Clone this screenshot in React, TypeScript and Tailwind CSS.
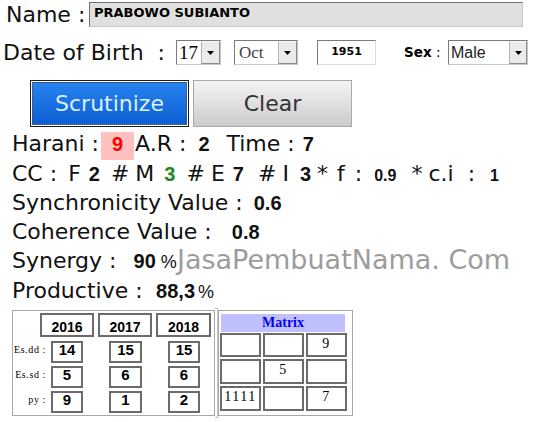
import React from "react";

const sans = "font-['DejaVu_Sans',sans-serif]";
const val = "font-['Liberation_Sans',sans-serif] text-[20px] font-bold";
const small = "font-['Liberation_Sans',sans-serif] text-[16px] font-bold";
const pct = "font-['Liberation_Sans',sans-serif] text-[18px]";

function Arrow() {
  return (
    <svg width="7" height="4" viewBox="0 0 7 4">
      <path d="M0 0H7L3.5 4Z" fill="#000" />
    </svg>
  );
}

function SelectBox({ width, text, textClass, btn = "w-[19px]" }: { width: string; text: string; textClass: string; btn?: string }) {
  return (
    <div className={`flex h-[25px] items-center border border-t-[#7b7b7b] border-l-[#7b7b7b] border-r-[#c6c6c6] border-b-[#c6c6c6] bg-white ${width}`}>
      <span className={textClass}>{text}</span>
      <div className={`ml-auto flex h-full items-center justify-center border border-t-[#f8f8f8] border-l-[#b4b4b4] border-r-[#8a8a8a] border-b-[#8a8a8a] bg-[#ebebeb] ${btn}`}>
        <Arrow />
      </div>
    </div>
  );
}

function Row({ children }: { children: React.ReactNode }) {
  return <div className="flex h-[29.3px] items-baseline whitespace-pre leading-[29.3px]">{children}</div>;
}

const years = ["2016", "2017", "2018"];
const rows = [
  { label: "Es.dd :", values: ["14", "15", "15"] },
  { label: "Es.sd :", values: ["5", "6", "6"] },
  { label: "py :", values: ["9", "1", "2"] },
];
const matrix = ["", "", "9", "", "5", "", "1111", "", "7"];

export default function App() {
  return (
    <div className={`relative h-[422px] w-[533px] overflow-hidden bg-white text-[#111] ${sans}`}>
      {/* Name */}
      <div className="mt-[2px] flex h-[25px] items-center">
        <span className="w-[89px] shrink-0 pl-[6px] text-[22px] leading-none">Name :</span>
        <div className="flex h-[25px] w-[434px] items-center border border-t-[#707070] border-l-[#707070] border-r-[#c8c8c8] border-b-[#c8c8c8] bg-[#e0e0e0] pb-[4px] pl-[4px]">
          <span className="text-[13px] font-bold leading-none text-black">PRABOWO SUBIANTO</span>
        </div>
      </div>

      {/* Date of birth */}
      <div className="mt-[13px] flex h-[25px] items-center">
        <span className="w-[176px] shrink-0 whitespace-pre pl-[3px] text-[22px] leading-none">Date of Birth  :</span>
        <SelectBox width="w-[45px]" text="17" textClass="pl-[2px] font-['Liberation_Serif',serif] text-[19px] leading-none text-black" />
        <div className="ml-[13px]">
          <SelectBox width="w-[64px]" text="Oct" textClass="pl-[4px] font-['Liberation_Serif',serif] text-[17px] leading-none text-[#444]" />
        </div>
        <div className="ml-[19px] flex h-[25px] w-[59px] items-center justify-center border border-t-[#7b7b7b] border-l-[#7b7b7b] border-r-[#dcdcdc] border-b-[#dcdcdc] pb-[3px]">
          <span className="text-[11px] font-bold leading-none text-black">1951</span>
        </div>
        <span className="ml-[28px] w-[44px] shrink-0 text-[13.5px] leading-none text-black">
          <b>Sex</b> :
        </span>
        <SelectBox width="w-[80px]" btn="w-[18px]" text="Male" textClass="pl-[2px] font-['Liberation_Sans',sans-serif] text-[16px] leading-none text-[#222]" />
      </div>

      {/* Buttons */}
      <div className="mt-[15px] flex">
        <div className="ml-[30px] h-[47px] w-[159px] border border-[#1c1c1c] bg-white p-[1px]">
          <div className="flex h-full w-full items-center justify-center border border-dotted border-[#5a4a30] bg-linear-to-b from-[#2682ee] to-[#0c5fd3] text-[22px] text-[#dcefff]">
            Scrutinize
          </div>
        </div>
        <div className="ml-[4px] flex h-[47px] w-[159px] items-center justify-center border border-[#a9a9a9] bg-linear-to-b from-[#f4f4f4] via-[#e0e0e0] to-[#cbcbcb] text-[22px] text-[#333]">
          Clear
        </div>
      </div>

      {/* Results */}
      <div className="mt-[2.25px] pl-[12px] text-[22px]">
        <Row>
          <span>Harani :</span>
          <span className="ml-[2px] flex h-[28px] w-[33px] items-center justify-center bg-[#ffc0c0] pb-[3px]">
            <span className="font-['Liberation_Sans',sans-serif] text-[20px] font-bold leading-none text-[#ff0000]">9</span>
          </span>
          <span className="ml-[1px]">A.R :</span>
          <span className={`${val} ml-[12px]`}>2</span>
          <span className="ml-[17px]">Time :</span>
          <span className={`${val} ml-[8px]`}>7</span>
        </Row>
        <Row>
          <span>CC :</span>
          <span className="ml-[11px]">F</span>
          <span className={`${val} ml-[8px]`}>2</span>
          <span className="ml-[11px]">#</span>
          <span className="ml-[6px]">M</span>
          <span className={`${val} ml-[10px] text-[#1a8a1a]`}>3</span>
          <span className="ml-[11px]">#</span>
          <span className="ml-[6px]">E</span>
          <span className={`${val} ml-[8px]`}>7</span>
          <span className="ml-[14px]">#</span>
          <span className="ml-[6px]">I</span>
          <span className={`${val} ml-[11px]`}>3</span>
          <span className="ml-[6px]">*</span>
          <span className="ml-[9px]">f</span>
          <span className="ml-[10px]">:</span>
          <span className={`${small} ml-[12px]`}>0.9</span>
          <span className="ml-[15px]">*</span>
          <span className="ml-[6px]">c.i</span>
          <span className="ml-[14px]">:</span>
          <span className={`${small} ml-[15px]`}>1</span>
        </Row>
        <Row>
          <span>Synchronicity Value :</span>
          <span className={`${val} ml-[11px]`}>0.6</span>
        </Row>
        <Row>
          <span>Coherence Value :</span>
          <span className={`${val} ml-[20px]`}>0.8</span>
        </Row>
        <Row>
          <span>Synergy :</span>
          <span className={`${val} ml-[17px]`}>90</span>
          <span className={`${pct} ml-[5px]`}>%</span>
        </Row>
        <Row>
          <span>Productive :</span>
          <span className={`${val} ml-[13.5px]`}>88,3</span>
          <span className={`${pct} ml-[3px]`}>%</span>
        </Row>
      </div>

      {/* Tables */}
      <div className="mt-[5px] flex items-start pl-[12px] text-black">
        <div className="h-[106px] w-[203px] border border-[#a8a8a8] font-['Liberation_Sans',sans-serif]">
          <div className="mt-[2px] flex">
            {years.map((y, i) => (
              <div
                key={y}
                className={`flex h-[24px] items-center justify-center border-2 border-[#6b6b6b] pt-[3px] text-[14px] font-bold leading-none ${
                  i === 0 ? "ml-[27px] w-[54px]" : i === 1 ? "ml-[4px] w-[54px]" : "ml-[4px] w-[55px]"
                }`}
              >
                {y}
              </div>
            ))}
          </div>
          {rows.map((r, ri) => (
            <div key={r.label} className={`flex h-[22px] ${ri === 0 ? "mt-[4px]" : "mt-[3px]"}`}>
              <span className="flex w-[38px] items-center justify-end whitespace-nowrap pb-[4px] pr-[5px] font-['Liberation_Serif',serif] text-[10px] leading-none tracking-[0.6px]">
                {r.label}
              </span>
              {r.values.map((v, vi) => (
                <div
                  key={vi}
                  className={`flex h-[22px] items-center justify-center border-2 border-[#6b6b6b] pb-[6px] text-[15px] font-bold leading-none ${
                    vi === 0 ? "w-[32px]" : vi === 1 ? "ml-[26px] w-[33px]" : "ml-[26px] w-[32px]"
                  }`}
                >
                  {v}
                </div>
              ))}
            </div>
          ))}
        </div>

        <div className="-mt-[2px] h-[110px] w-[3px] border border-l-0 border-[#c4c4c4] bg-white" />

        <div className="h-[106px] w-[135px] border border-[#a8a8a8] font-['Liberation_Serif',serif]">
          <div className="ml-[2px] mt-[3px] flex h-[18px] w-[124px] items-center justify-center bg-[#c0c0ff] text-[14px] font-bold leading-none text-[#0000ff]">
            Matrix
          </div>
          <div className="ml-[1px] mt-[1px] grid grid-cols-[41px_41px_41px] grid-rows-[24px_25px_25px] gap-[2px]">
            {matrix.map((m, i) => (
              <div key={i} className="flex items-center justify-center border-2 border-[#6b6b6b] pb-[3px] text-[14px] leading-none tracking-[1.5px]">
                {m}
              </div>
            ))}
          </div>
        </div>
      </div>

      {/* Watermark */}
      <div className="pointer-events-none absolute left-[177px] top-[246px] whitespace-nowrap text-[27px] leading-none text-[#9c9c9c]">
        JasaPembuatNama. Com
      </div>
    </div>
  );
}
